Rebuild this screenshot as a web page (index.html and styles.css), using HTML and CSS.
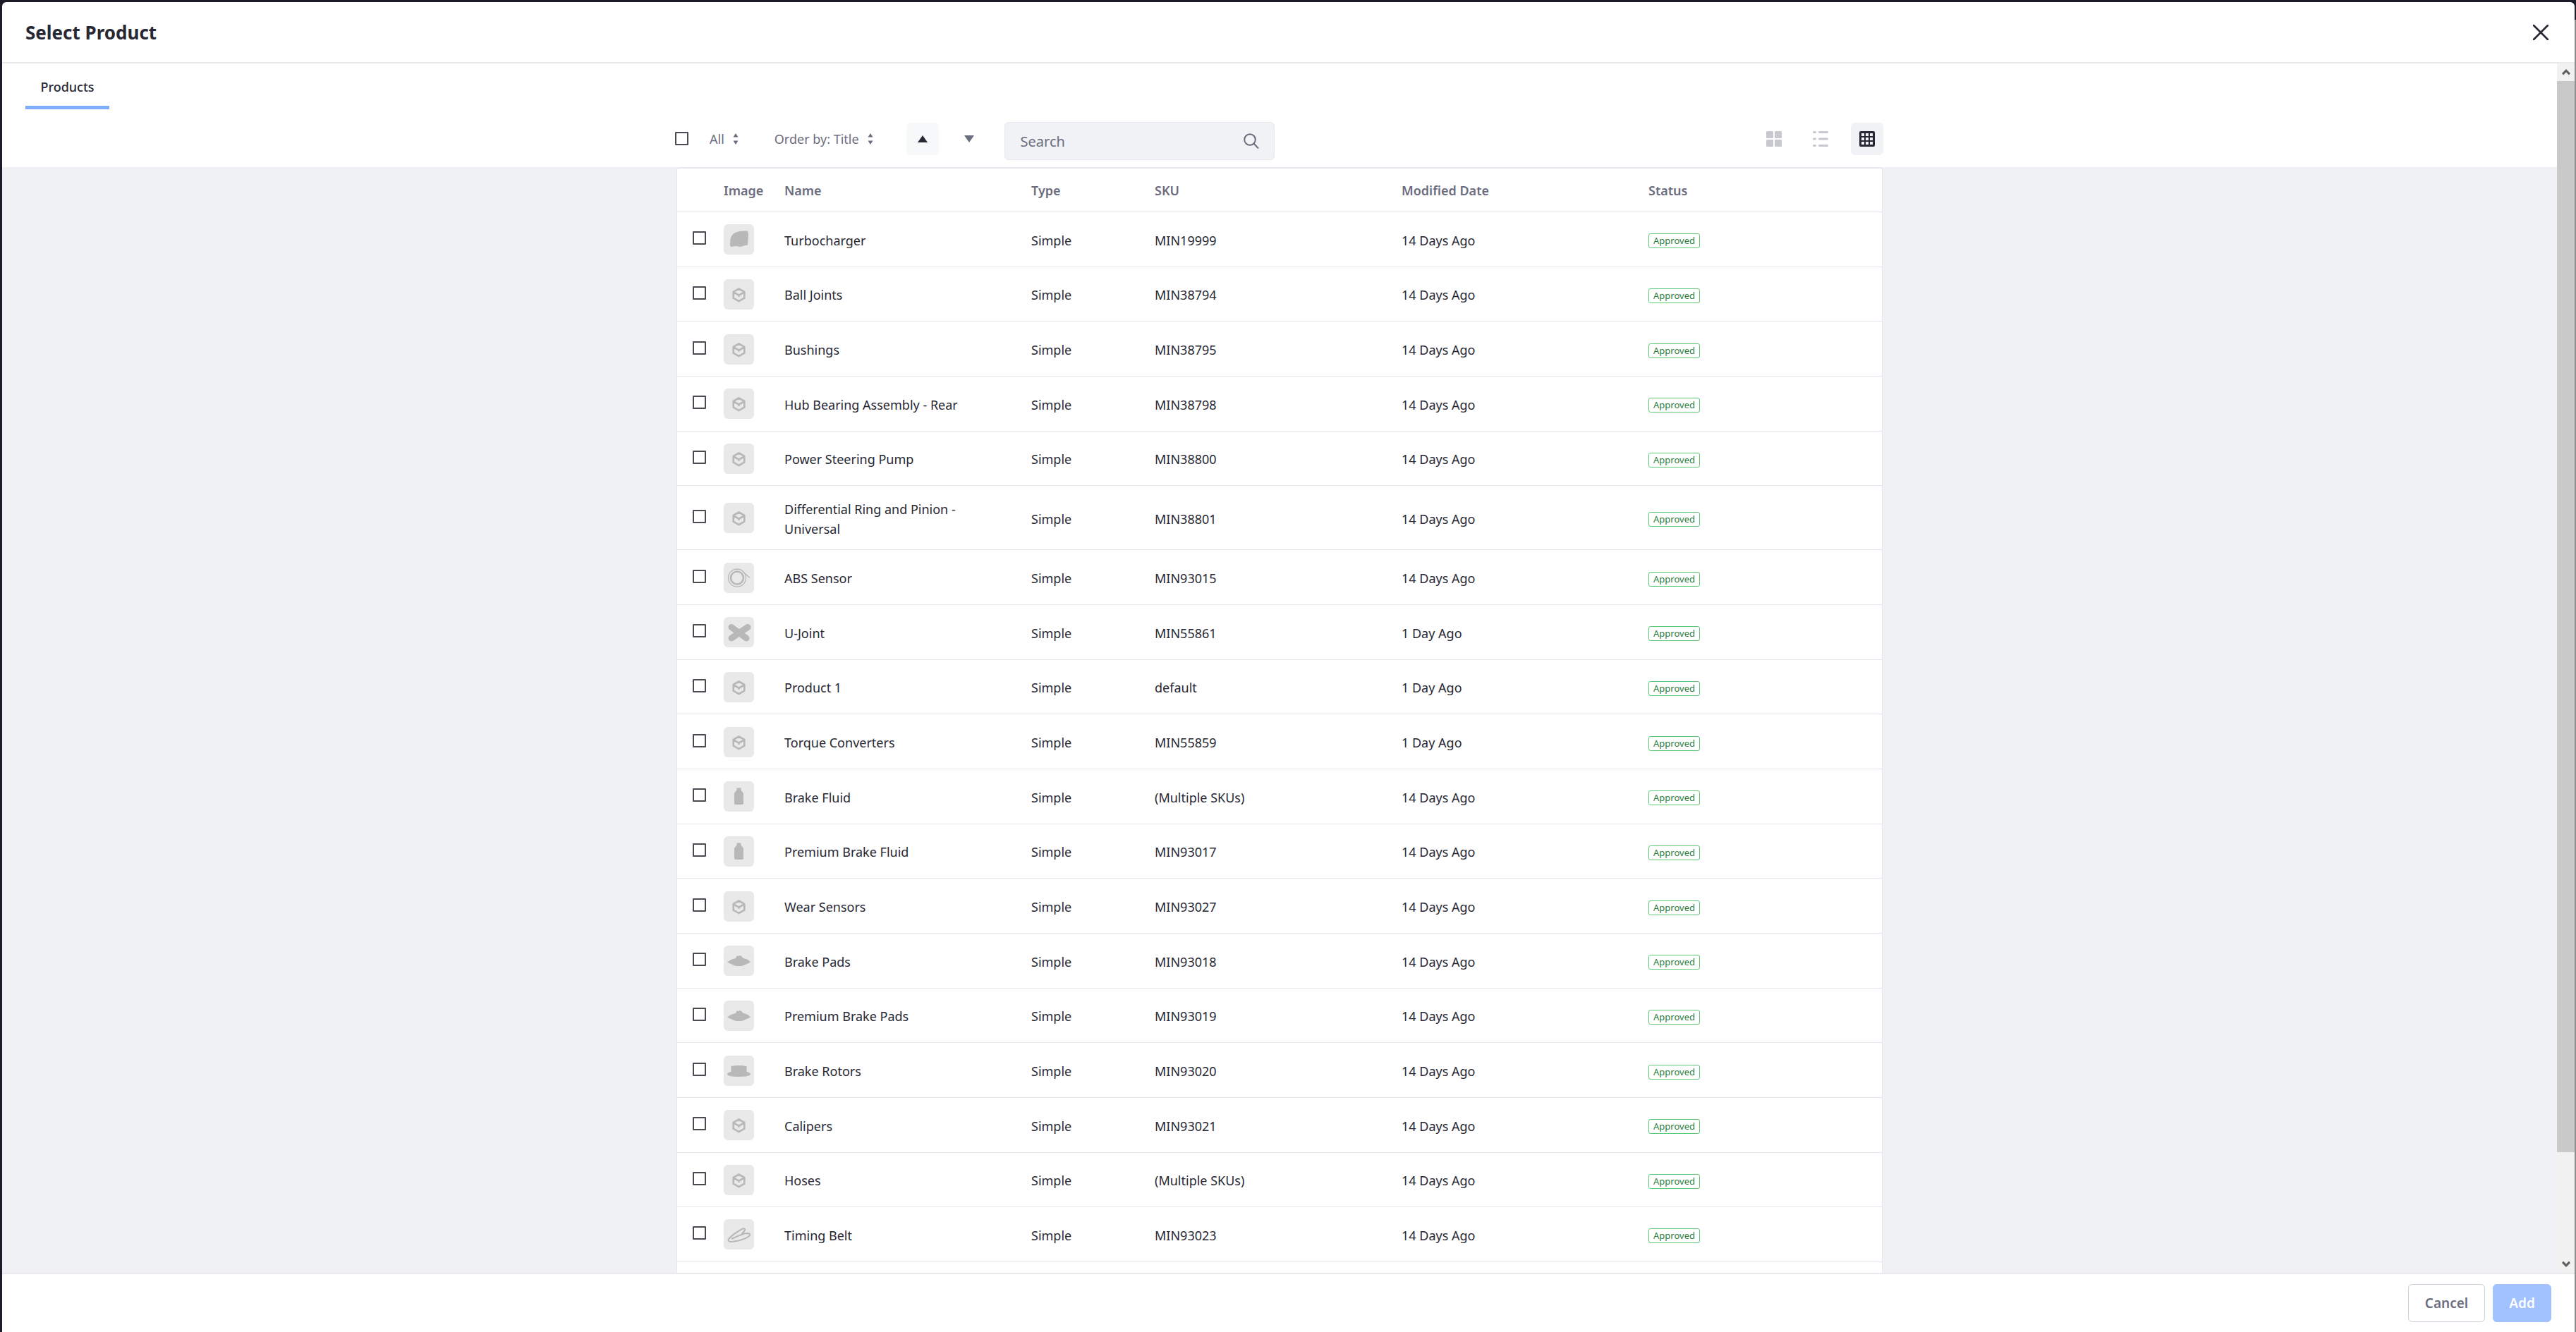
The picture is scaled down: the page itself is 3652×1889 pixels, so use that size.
FILE: index.html
```html
<!DOCTYPE html>
<html lang="en">
<head>
    <meta charset="UTF-8">
    <title>Select Product</title>
    <link rel="stylesheet" href="styles.css">
</head>
<body>

<svg class="icon-defs" width="0" height="0">
    <symbol id="thumb-box" viewBox="0 0 43 43">
        <path class="line" d="M21.5 13.5l7.8 4.4v8.8l-7.8 4.4-7.8-4.4v-8.8zM14 18.5l7.5 4.2 7.5-4.2M21.5 22.7v2"/>
    </symbol>
    <symbol id="thumb-turbo" viewBox="0 0 43 43">
        <path d="M17 11.500C23 9.500 29 9.500 33.500 9.500L35 13 34 29.500 28.500 30.500 24 32 17 31 10 32 9 29.500 9.500 21C10.500 16.500 13 13 17 11.500z"/>
    </symbol>
    <symbol id="thumb-ring" viewBox="0 0 43 43">
        <circle class="line" cx="19" cy="21.500" r="9"/>
        <circle class="line thin" cx="19" cy="21.500" r="12.500"/>
        <path class="line thin" d="M27 12.500l10 9"/>
    </symbol>
    <symbol id="thumb-joint" viewBox="0 0 43 43">
        <path class="line heavy" d="M11 14.500l21 15.500M34 14.500L11 30"/>
    </symbol>
    <symbol id="thumb-bottle" viewBox="0 0 43 43">
        <path d="M18.500 9.500h6v3l3.500 4.500v14c0 1.500-1 2-3 2h-7c-2 0-3-.5-3-2V17l3.500-4.500z"/>
    </symbol>
    <symbol id="thumb-pad" viewBox="0 0 43 43">
        <path d="M5 23.500C9 20.500 13 18.500 17 18l1.500-3.500 3 .5 1-1 2 .5L28 18c4 .5 7.500 2.500 10 5.500l-5 2.500c-3 .5-5 3-8 3h-7c-3 0-5-2.500-8-3z"/>
    </symbol>
    <symbol id="thumb-rotor" viewBox="0 0 43 43">
        <path d="M10.500 15c6-1.500 16-1.500 22 0v8c3 .5 5.500 1.500 5.500 3.500s-7 3.500-16.500 3.500S5 28.500 5 26.500s2.500-3 5.500-3.500z"/>
    </symbol>
    <symbol id="thumb-belt" viewBox="0 0 43 43">
        <path class="line mid" d="M7.500 27.500C13 22 21 16.500 27 13.500c3-1 4 1 2.500 3l-3.500 4 8.500-.5c3 0 3.500 2.500 1.500 4C31 28 20 31 12 32c-5 .5-6.500-2-4.500-4.500zM11 28c6-3 13-6 18-7"/>
    </symbol>
    <symbol id="tool-sort" viewBox="0 0 8 18">
        <path d="M4 1l3.500 5.500h-7zM4 17L.5 11.500h7z"/>
    </symbol>
</svg>

<div class="modal">
    <header class="modal-header">
        <h1 class="modal-title">Select Product</h1>
        <svg class="close-icon" viewBox="0 0 22 22"><path d="M1 1l20 20M21 1L1 21"/></svg>
    </header>

    <div class="modal-middle">
        <main class="modal-body">
            <nav class="tabs">
                <span class="tab">Products</span>
            </nav>

            <div class="toolbar">
                <span class="check"></span>
                <span class="tool-label tool-all">All <svg class="sort-caret"><use href="#tool-sort"/></svg></span>
                <span class="tool-label tool-order">Order by: Title <svg class="sort-caret"><use href="#tool-sort"/></svg></span>
                <span class="order-btn active"><svg viewBox="0 0 14 10"><path d="M7 0l7 10H0z"/></svg></span>
                <span class="order-btn"><svg viewBox="0 0 14 10"><path d="M7 10L0 0h14z"/></svg></span>
                <div class="search">
                    <span>Search</span>
                    <svg viewBox="0 0 22 22"><circle cx="9" cy="9" r="7.800"/><path d="M14.500 14.500l6.500 7"/></svg>
                </div>
                <div class="views">
                    <span class="view-btn">
                        <svg viewBox="0 0 22 22"><rect width="10" height="10" rx="1.500"/><rect x="12" width="10" height="10" rx="1.500"/><rect y="12" width="10" height="10" rx="1.500"/><rect x="12" y="12" width="10" height="10" rx="1.500"/></svg>
                    </span>
                    <span class="view-btn">
                        <svg viewBox="0 0 22 22"><rect y="0" width="5" height="3" rx="1.500"/><rect x="8" y="0" width="14" height="3" rx="1.500"/><rect y="9.500" width="5" height="3" rx="1.500"/><rect x="8" y="9.500" width="14" height="3" rx="1.500"/><rect y="19" width="5" height="3" rx="1.500"/><rect x="8" y="19" width="14" height="3" rx="1.500"/></svg>
                    </span>
                    <span class="view-btn active">
                        <svg viewBox="0 0 22 22"><path fill-rule="evenodd" d="M2 0h18a2 2 0 0 1 2 2v18a2 2 0 0 1-2 2H2a2 2 0 0 1-2-2V2a2 2 0 0 1 2-2zM3 3v4h4V3zM9 3v4h4V3zM15 3v4h4V3zM3 9v4h4V9zM9 9v4h4V9zM15 9v4h4V9zM3 15v4h4v-4zM9 15v4h4v-4zM15 15v4h4v-4z"/></svg>
                    </span>
                </div>
            </div>

            <div class="content">
                <div class="card">
                    <div class="row head">
                        <span></span><span>Image</span><span>Name</span><span>Type</span><span>SKU</span><span>Modified Date</span><span>Status</span>
                    </div>
                    <div class="row"><span class="check"></span><span class="thumb"><svg><use href="#thumb-turbo"/></svg></span><span class="cell">Turbocharger</span><span class="cell">Simple</span><span class="cell">MIN19999</span><span class="cell">14 Days Ago</span><span class="badge">Approved</span></div>
                    <div class="row"><span class="check"></span><span class="thumb"><svg><use href="#thumb-box"/></svg></span><span class="cell">Ball Joints</span><span class="cell">Simple</span><span class="cell">MIN38794</span><span class="cell">14 Days Ago</span><span class="badge">Approved</span></div>
                    <div class="row"><span class="check"></span><span class="thumb"><svg><use href="#thumb-box"/></svg></span><span class="cell">Bushings</span><span class="cell">Simple</span><span class="cell">MIN38795</span><span class="cell">14 Days Ago</span><span class="badge">Approved</span></div>
                    <div class="row"><span class="check"></span><span class="thumb"><svg><use href="#thumb-box"/></svg></span><span class="cell">Hub Bearing Assembly - Rear</span><span class="cell">Simple</span><span class="cell">MIN38798</span><span class="cell">14 Days Ago</span><span class="badge">Approved</span></div>
                    <div class="row"><span class="check"></span><span class="thumb"><svg><use href="#thumb-box"/></svg></span><span class="cell">Power Steering Pump</span><span class="cell">Simple</span><span class="cell">MIN38800</span><span class="cell">14 Days Ago</span><span class="badge">Approved</span></div>
                    <div class="row tall"><span class="check"></span><span class="thumb"><svg><use href="#thumb-box"/></svg></span><span class="cell">Differential Ring and Pinion - Universal</span><span class="cell">Simple</span><span class="cell">MIN38801</span><span class="cell">14 Days Ago</span><span class="badge">Approved</span></div>
                    <div class="row"><span class="check"></span><span class="thumb"><svg><use href="#thumb-ring"/></svg></span><span class="cell">ABS Sensor</span><span class="cell">Simple</span><span class="cell">MIN93015</span><span class="cell">14 Days Ago</span><span class="badge">Approved</span></div>
                    <div class="row"><span class="check"></span><span class="thumb"><svg><use href="#thumb-joint"/></svg></span><span class="cell">U-Joint</span><span class="cell">Simple</span><span class="cell">MIN55861</span><span class="cell">1 Day Ago</span><span class="badge">Approved</span></div>
                    <div class="row"><span class="check"></span><span class="thumb"><svg><use href="#thumb-box"/></svg></span><span class="cell">Product 1</span><span class="cell">Simple</span><span class="cell">default</span><span class="cell">1 Day Ago</span><span class="badge">Approved</span></div>
                    <div class="row"><span class="check"></span><span class="thumb"><svg><use href="#thumb-box"/></svg></span><span class="cell">Torque Converters</span><span class="cell">Simple</span><span class="cell">MIN55859</span><span class="cell">1 Day Ago</span><span class="badge">Approved</span></div>
                    <div class="row"><span class="check"></span><span class="thumb"><svg><use href="#thumb-bottle"/></svg></span><span class="cell">Brake Fluid</span><span class="cell">Simple</span><span class="cell">(Multiple SKUs)</span><span class="cell">14 Days Ago</span><span class="badge">Approved</span></div>
                    <div class="row"><span class="check"></span><span class="thumb"><svg><use href="#thumb-bottle"/></svg></span><span class="cell">Premium Brake Fluid</span><span class="cell">Simple</span><span class="cell">MIN93017</span><span class="cell">14 Days Ago</span><span class="badge">Approved</span></div>
                    <div class="row"><span class="check"></span><span class="thumb"><svg><use href="#thumb-box"/></svg></span><span class="cell">Wear Sensors</span><span class="cell">Simple</span><span class="cell">MIN93027</span><span class="cell">14 Days Ago</span><span class="badge">Approved</span></div>
                    <div class="row"><span class="check"></span><span class="thumb"><svg><use href="#thumb-pad"/></svg></span><span class="cell">Brake Pads</span><span class="cell">Simple</span><span class="cell">MIN93018</span><span class="cell">14 Days Ago</span><span class="badge">Approved</span></div>
                    <div class="row"><span class="check"></span><span class="thumb"><svg><use href="#thumb-pad"/></svg></span><span class="cell">Premium Brake Pads</span><span class="cell">Simple</span><span class="cell">MIN93019</span><span class="cell">14 Days Ago</span><span class="badge">Approved</span></div>
                    <div class="row"><span class="check"></span><span class="thumb"><svg><use href="#thumb-rotor"/></svg></span><span class="cell">Brake Rotors</span><span class="cell">Simple</span><span class="cell">MIN93020</span><span class="cell">14 Days Ago</span><span class="badge">Approved</span></div>
                    <div class="row"><span class="check"></span><span class="thumb"><svg><use href="#thumb-box"/></svg></span><span class="cell">Calipers</span><span class="cell">Simple</span><span class="cell">MIN93021</span><span class="cell">14 Days Ago</span><span class="badge">Approved</span></div>
                    <div class="row"><span class="check"></span><span class="thumb"><svg><use href="#thumb-box"/></svg></span><span class="cell">Hoses</span><span class="cell">Simple</span><span class="cell">(Multiple SKUs)</span><span class="cell">14 Days Ago</span><span class="badge">Approved</span></div>
                    <div class="row"><span class="check"></span><span class="thumb"><svg><use href="#thumb-belt"/></svg></span><span class="cell">Timing Belt</span><span class="cell">Simple</span><span class="cell">MIN93023</span><span class="cell">14 Days Ago</span><span class="badge">Approved</span></div>
                </div>
            </div>
        </main>

        <div class="scrollbar">
            <span class="scroll-btn"><svg viewBox="0 0 12 9"><path d="M6 0l6 6-2 2.500-4-4-4 4L0 6z"/></svg></span>
            <div class="scroll-track"><div class="scroll-thumb"></div></div>
            <span class="scroll-btn"><svg viewBox="0 0 12 9"><path d="M6 9L0 3l2-2.500 4 4 4-4L12 3z"/></svg></span>
        </div>
    </div>

    <footer class="modal-footer">
        <button class="btn btn-cancel">Cancel</button>
        <button class="btn btn-add">Add</button>
    </footer>
</div>

</body>
</html>
```

FILE: styles.css
```css
* {
    box-sizing: border-box;
}
html, body {
    height: 100%;
}
body {
    margin: 0;
    padding: 3px 2px 0 3px;
    overflow: hidden;
    background-color: #1c1c28;
    color: #272833;
    font-family: "Noto Sans", "Open Sans", sans-serif;
    font-size: 18px;
}
/* window edge on the right, lighter below the title bar */
body::after {
    content: "";
    position: absolute;
    top: 28px;
    right: 0;
    bottom: 0;
    width: 2px;
    background-color: #8e8e8e;
}
.icon-defs {
    position: absolute;
}
.modal {
    display: flex;
    flex-direction: column;
    height: 100%;
    background-color: #fff;
    border-radius: 6px 6px 0 0;
    overflow: hidden;
}

/* header */
.modal-header {
    display: flex;
    align-items: center;
    justify-content: space-between;
    flex: none;
    height: 87px;
    padding: 0 37px 0 33px;
    border-bottom: 2px solid #e9e9ee;
}
.modal-title {
    margin: 0;
    font-size: 26px;
    font-weight: 700;
}
.close-icon {
    width: 22px;
    height: 22px;
}
.close-icon path {
    fill: none;
    stroke: #272833;
    stroke-width: 2.6;
    stroke-linecap: round;
}

/* middle part: page + scrollbar */
.modal-middle {
    display: flex;
    flex: 1;
    min-height: 0;
}
.modal-body {
    display: flex;
    flex-direction: column;
    flex: 1;
    min-width: 0;
}
.tabs {
    flex: none;
    height: 66px;
    padding-left: 33px;
}
.tab {
    display: block;
    width: 119px;
    height: 65px;
    padding-top: 21px;
    text-align: center;
    font-size: 18px;
    font-weight: 500;
    border-bottom: 5px solid #80acff;
}

/* toolbar */
.toolbar {
    display: flex;
    align-items: center;
    flex: none;
    width: 1714px;
    height: 81px;
    margin: 0 auto;
    padding-right: 1px;
}
.check {
    display: block;
    flex: none;
    width: 19px;
    height: 19px;
    background-color: #fff;
    border: 2px solid #4a4a52;
    border-radius: 1px;
}
.tool-label {
    display: flex;
    align-items: center;
    color: #6b6c7e;
    font-size: 18px;
}
.tool-all {
    margin-left: 30px;
    gap: 12px;
}
.tool-order {
    margin-left: 51px;
    gap: 12px;
}
.sort-caret {
    width: 8px;
    height: 18px;
    fill: #6b6c7e;
}
.order-btn {
    display: flex;
    align-items: center;
    justify-content: center;
    width: 46px;
    height: 46px;
    border-radius: 6px;
}
.order-btn svg {
    width: 14px;
    height: 10px;
    fill: #6b6c7e;
}
.order-btn.active {
    margin-left: 47px;
    margin-right: 20px;
    background-color: #f7f8f9;
}
.order-btn.active svg {
    fill: #272833;
}
.search {
    display: flex;
    align-items: center;
    justify-content: space-between;
    width: 383px;
    height: 54px;
    margin-left: 27px;
    margin-top: 6px;
    padding: 2px 21px 0 22px;
    background-color: #f1f2f5;
    border: 1px solid #e7e7ed;
    border-radius: 6px;
    color: #6b6c7e;
    font-size: 20px;
}
.search svg {
    width: 22px;
    height: 22px;
    margin-top: -2px;
    fill: none;
    stroke: #6b6c7e;
    stroke-width: 2;
}
.views {
    display: flex;
    gap: 20px;
    margin-left: auto;
}
.view-btn {
    display: flex;
    align-items: center;
    justify-content: center;
    width: 46px;
    height: 46px;
    border-radius: 6px;
}
.view-btn svg {
    width: 22px;
    height: 22px;
    fill: #c8c8cf;
}
.view-btn.active {
    background-color: #f1f2f5;
}
.view-btn.active svg {
    fill: #272833;
}

/* table */
.content {
    flex: 1;
    min-height: 0;
    overflow: hidden;
    background-color: #f0f1f5;
}
.card {
    width: 1710px;
    min-height: 100%;
    margin: 0 auto;
    background-color: #fff;
    border: 1px solid #e7e7ed;
    border-top-width: 2px;
    border-bottom: none;
    border-radius: 4px 4px 0 0;
}
.row {
    display: grid;
    grid-template-columns: 66px 86px 350px 175px 350px 350px 1fr;
    align-items: center;
    height: 77.67px;
    border-bottom: 1px solid #e7e7ed;
}
.row.tall {
    height: 91px;
}
.row.head {
    height: 62px;
    color: #6b6c7e;
    font-weight: 600;
    font-size: 18px;
}
.row .check {
    margin-left: 22px;
    margin-bottom: 3px;
}
.cell {
    padding-top: 3px;
    padding-right: 40px;
    line-height: 28px;
}
.thumb {
    display: block;
    width: 43px;
    height: 43px;
    margin-top: 1px;
    background-color: #e9e9e9;
    border-radius: 6px;
}
.thumb svg {
    display: block;
    width: 43px;
    height: 43px;
    fill: #b8b8b8;
}
.line {
    fill: none;
    stroke: #b8b8b8;
    stroke-width: 2.600;
    stroke-linejoin: round;
}
.line.thin {
    stroke-width: 1.300;
}
.line.mid {
    stroke-width: 2;
}
.line.heavy {
    stroke-width: 9;
    stroke-linecap: round;
}
.badge {
    justify-self: start;
    width: 73px;
    height: 21px;
    margin-top: 5px;
    border: 1px solid #5aca75;
    border-radius: 3px;
    color: #287d3c;
    font-size: 13px;
    line-height: 19px;
    text-align: center;
}

/* scrollbar */
.scrollbar {
    display: flex;
    flex-direction: column;
    flex: none;
    width: 25px;
    background-color: #f1f1f1;
}
.scroll-btn {
    display: flex;
    align-items: center;
    justify-content: center;
    flex: none;
    height: 25px;
}
.scroll-btn svg {
    width: 12px;
    height: 9px;
    fill: #606060;
}
.scroll-track {
    flex: 1;
}
.scroll-thumb {
    height: 1519px;
    background-color: #c9c9c9;
}

/* footer */
.modal-footer {
    display: flex;
    align-items: center;
    justify-content: flex-end;
    gap: 11px;
    flex: none;
    height: 84px;
    padding: 0 33px 0 0;
    border-top: 2px solid #e9e9ee;
}
.btn {
    height: 54px;
    border-radius: 6px;
    font-family: inherit;
    font-size: 19px;
    font-weight: 600;
}
.btn-cancel {
    width: 109px;
    background-color: #fff;
    border: 1px solid #cdced9;
    color: #6b6c7e;
}
.btn-add {
    width: 83px;
    background-color: #a1c1ff;
    border: 1px solid #a1c1ff;
    color: #fff;
}
```
